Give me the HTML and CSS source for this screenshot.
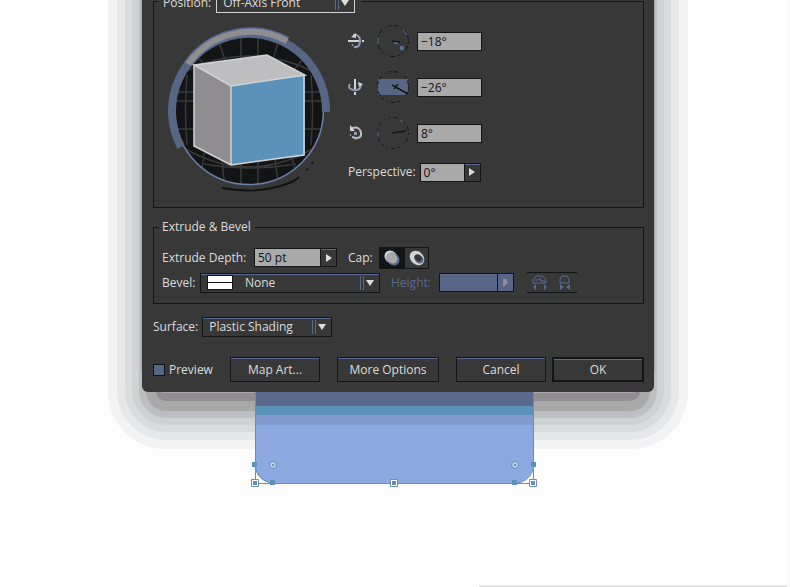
FILE: index.html
```
<!DOCTYPE html>
<html lang="en">
<head>
    <meta charset="UTF-8">
    <meta name="viewport" content="width=device-width, initial-scale=1.0">
    <title>3D Extrude &amp; Bevel Options</title>
    <link rel="stylesheet" href="styles.css">
</head>
<body>
    <main class="canvas">
        <form class="dialog">
            <fieldset class="group position-group">
                <legend class="position-legend">
                    <label for="position">Position:</label>
                    <span class="dropdown active">
                        <select id="position">
                            <option>Off-Axis Front</option>
                        </select>
                        <svg class="caret" width="20" height="16" viewBox="0 0 20 16"><path d="M1.500 1V15M4.500 1V15" stroke="#586a94"/><path d="M7 5h8l-4 6z" fill="#dcdcdc"/></svg>
                    </span>
                </legend>

                <div class="rotation">
                    <!-- Track cube -->
                    <svg class="track-cube" width="168" height="168" viewBox="166 26 168 168">
                        <circle cx="249" cy="110" r="74" fill="#131416"/>
                        <g fill="none" stroke="#383838" stroke-width="1.500">
                            <path d="M241 37V184M258 37V184M219 42L225 60M278 42L273 60M196 56L212 72M304 58L290 74M187 75Q184 110 187 145M311 75Q314 110 311 145M205 150L202 168M222 160L224 180M275 160L278 182M291 155L296 172"/>
                            <path d="M176 101H323M176 129H323M178 92H320M184 72Q249 40 314 72M184 148Q249 186 314 148M204 164Q249 172 296 164"/>
                        </g>
                        <circle cx="249" cy="110" r="74.500" fill="none" stroke="#6b7fae" stroke-width="1.500"/>
                        <path d="M181 147A77 77 0 1 1 326 112" fill="none" stroke="#586685" stroke-width="8"/>
                        <path d="M188 64A77 77 0 0 1 287 41" fill="none" stroke="#586a94" stroke-width="9"/>
                        <path d="M188 64A77 77 0 0 1 287 41" fill="none" stroke="#8f8d90" stroke-width="6"/>
                        <path d="M222 188Q250 193 272 188T299 177M306 170l2-1M312 164l1-2" fill="none" stroke="#131416" stroke-width="2"/>
                        <path d="M194 65L267 55L305 75L231 86Z" fill="#bebdc0"/>
                        <path d="M194 65L231 86V165L194 146Z" fill="#8f8d90"/>
                        <path d="M231 86L305 75V155L231 165Z" fill="#5c92ba"/>
                        <path d="M194 65L267 55L305 75L231 86ZM194 65V146L231 165L304 155V75M231 86V165" fill="none" stroke="#d2d3d5" stroke-width="1.500"/>
                    </svg>

                    <div class="axes">
                        <div class="axis">
                            <svg width="16" height="16" viewBox="0 0 16 16" fill="none"><path d="M0 8H13M14 8h2" stroke="#d2d3d5" stroke-width="2"/><path d="M5 2Q12 1 12 8T6 14" stroke="#8f9bb8" stroke-width="2"/><path d="M3 4l5-4v5z" fill="#d2d3d5"/><path d="M4 11l1 2" stroke="#bebdc0"/></svg>
                            <svg width="34" height="34" viewBox="0 0 34 34" fill="none"><circle cx="17" cy="17" r="15.500" stroke="#131416" stroke-dasharray="3 2 5 3 1 3"/><path d="M2 13v7M27 6l4 5" stroke="#586a94"/><path d="M24 22h4v4h-4zM18 18h4v2h-4z" fill="#586a94"/><path d="M16 17l8 1" stroke="#131416" stroke-width="1.500"/></svg>
                            <input class="field" type="text" value="−18°" aria-label="Rotate around the X axis">
                        </div>
                        <div class="axis">
                            <svg width="16" height="16" viewBox="0 0 16 16" fill="none"><path d="M7 0V10M7 13v3" stroke="#d2d3d5" stroke-width="2"/><path d="M2 5Q-1 10 6 11Q12 12 13 6" stroke="#8f9bb8" stroke-width="2"/><path d="M10 3l5 2l-4 3z" fill="#d2d3d5"/></svg>
                            <svg width="34" height="34" viewBox="0 0 34 34" fill="none"><path d="M2 9H32V25H2z" fill="#586685"/><circle cx="17" cy="17" r="15.500" stroke="#131416" stroke-dasharray="3 2 5 3 1 3"/><path d="M16 15l16 9M18 19l4-5" stroke="#131416" stroke-width="1.500"/></svg>
                            <input class="field" type="text" value="−26°" aria-label="Rotate around the Y axis">
                        </div>
                        <div class="axis">
                            <svg width="16" height="16" viewBox="0 0 16 16" fill="none"><path d="M4 3Q12 1 13 8T4 12" stroke="#bebdc0" stroke-width="2"/><path d="M2 0v6h5z" fill="#d2d3d5"/><path d="M6 7h3v3H6z" fill="#8f9bb8"/><path d="M2 9l1 2M6 14h3" stroke="#8f9bb8"/></svg>
                            <svg width="34" height="34" viewBox="0 0 34 34" fill="none"><circle cx="17" cy="17" r="15.500" stroke="#131416" stroke-dasharray="2 3 4 4 1 3"/><path d="M2 16v4M24 4l3 2" stroke="#586a94"/><path d="M16 17l14-2" stroke="#131416" stroke-width="1.500"/></svg>
                            <input class="field" type="text" value="8°" aria-label="Rotate around the Z axis">
                        </div>
                        <div class="perspective">
                            <label for="perspective">Perspective:</label>
                            <span class="stepper">
                                <input class="field" id="perspective" type="text" value="0°">
                                <button type="button" aria-label="Perspective slider"><svg width="6" height="8" viewBox="0 0 6 8"><path d="M0 0l6 4l-6 4z" fill="#dcdcdc"/></svg></button>
                            </span>
                        </div>
                    </div>
                </div>
            </fieldset>

            <fieldset class="group extrude-group">
                <legend>Extrude &amp; Bevel</legend>

                <div class="row">
                    <label class="depth-label" for="depth">Extrude Depth:</label>
                    <span class="stepper depth">
                        <input class="field" id="depth" type="text" value="50 pt">
                        <button type="button" aria-label="Extrude depth slider"><svg width="6" height="8" viewBox="0 0 6 8"><path d="M0 0l6 4l-6 4z" fill="#dcdcdc"/></svg></button>
                    </span>
                    <span class="cap-label">Cap:</span>
                    <span class="caps">
                        <button type="button" class="cap selected" aria-label="Turn cap on for solid appearance"><svg width="18" height="18" viewBox="0 0 18 18"><ellipse cx="8" cy="8" rx="7" ry="6" transform="rotate(45 8 8)" fill="#d2d3d5"/><ellipse cx="10" cy="10" rx="7" ry="6" transform="rotate(45 10 10)" fill="#586a94"/><ellipse cx="9" cy="9" rx="6" ry="5" transform="rotate(45 9 9)" fill="#a9a9a9"/></svg></button>
                        <button type="button" class="cap" aria-label="Turn cap off for hollow appearance"><svg width="18" height="18" viewBox="0 0 18 18"><ellipse cx="9" cy="9" rx="8" ry="6.500" transform="rotate(45 9 9)" fill="#d2d3d5"/><ellipse cx="11" cy="10" rx="5" ry="4" transform="rotate(45 11 10)" fill="#586a94"/><ellipse cx="10" cy="9" rx="4" ry="3" transform="rotate(45 10 9)" fill="#383838"/></svg></button>
                    </span>
                </div>

                <div class="row">
                    <label class="bevel-label" for="bevel">Bevel:</label>
                    <span class="dropdown bevel">
                        <svg class="thumb" width="26" height="15" viewBox="0 0 26 15"><path d="M0 0H26V15H0z" fill="#131416"/><path d="M1 1H25V7H1zM1 8H25V14H1z" fill="#fff"/></svg>
                        <select id="bevel">
                            <option>None</option>
                        </select>
                        <svg class="caret" width="20" height="16" viewBox="0 0 20 16"><path d="M1.500 1V15M4.500 1V15" stroke="#586a94"/><path d="M7 5h8l-4 6z" fill="#dcdcdc"/></svg>
                    </span>
                    <label class="height-label" for="height">Height:</label>
                    <span class="stepper height">
                        <input class="field" id="height" type="text" disabled>
                        <button type="button" disabled aria-label="Height slider"><svg width="6" height="8" viewBox="0 0 6 8"><path d="M0 0h3l2 3l-2 3l-3 2z" fill="#8f8d90"/></svg></button>
                    </span>
                    <span class="extents">
                        <button type="button" disabled aria-label="Bevel extent out"><svg width="16" height="16" viewBox="0 0 16 16"><path d="M1 8V5l3-4h7l3 4v3zM3 5h3l2-2l1 3h4" fill="none" stroke="#586a94"/><path d="M1 12l3-3v6zM15 12l-3-3v6z" fill="#586a94"/></svg></button>
                        <button type="button" disabled aria-label="Bevel extent in"><svg width="16" height="16" viewBox="0 0 16 16"><path d="M3 8V4l2-3h5l2 3v4z" fill="none" stroke="#586a94"/><path d="M7 12l-4-3v6zM9 12l4-3v6z" fill="#586a94"/></svg></button>
                    </span>
                </div>
            </fieldset>

            <div class="surface">
                <label for="surface">Surface:</label>
                <span class="dropdown">
                    <select id="surface">
                        <option>Plastic Shading</option>
                    </select>
                    <svg class="caret" width="20" height="16" viewBox="0 0 20 16"><path d="M1.500 1V15M4.500 1V15" stroke="#586a94"/><path d="M7 5h8l-4 6z" fill="#dcdcdc"/></svg>
                </span>
            </div>

            <div class="actions">
                <label class="preview"><input type="checkbox">Preview</label>
                <button type="button" class="btn">Map Art...</button>
                <button type="button" class="btn wide">More Options</button>
                <div class="confirm">
                    <button type="button" class="btn">Cancel</button>
                    <button type="submit" class="btn default">OK</button>
                </div>
            </div>
        </form>

        <!-- Selected rounded rectangle on the artboard -->
        <svg class="artwork" width="290" height="98" viewBox="250 392 290 98">
            <path d="M255 392H533V465A18 18 0 0 1 515 483H273A18 18 0 0 1 255 465Z" fill="#8da7e0"/>
            <path d="M255 392H533V406H255z" fill="#5b6a8c"/>
            <path d="M255 406H533V415H255z" fill="#5c92ba"/>
            <path d="M255 415H533V425H255z" fill="#819bce"/>
            <path d="M255.500 392V483.500H533.500V392M255.500 465A18 18 0 0 0 273 483M533.500 465A18 18 0 0 1 515 483" fill="none" stroke="#5c92ba"/>
            <path d="M252 462h5v5h-5zM270 480h5v5h-5zM531 462h5v5h-5zM512 480h5v5h-5z" fill="#5c92ba"/>
            <g fill="#bdd0e8" stroke="#5c92ba">
                <circle cx="273" cy="465" r="3.500"/>
                <circle cx="515" cy="465" r="3.500"/>
            </g>
            <path d="M272 464h2v2h-2zM514 464h2v2h-2z" fill="#5c92ba"/>
            <g fill="#fff" stroke="#6f8fb0">
                <path d="M251.500 479.500h7v7h-7zM390.500 479.500h7v7h-7zM529.500 479.500h7v7h-7z"/>
            </g>
            <path d="M253 481h4v4h-4zM392 481h4v4h-4zM531 481h4v4h-4z" fill="#5c92ba"/>
        </svg>

        <div class="window-edge"></div>
    </main>
</body>
</html>
```
FILE: styles.css
```
* {
    box-sizing: border-box;
}
body {
    margin: 0;
    font-family: 'Open Sans', 'Noto Sans', sans-serif;
    font-size: 12px;
    font-weight: 500;
    line-height: 18px;
    color: #dcdcdc;
    background: #fdfdfd;
}
.canvas {
    position: relative;
    z-index: 0;
    min-height: 100vh;
    overflow: hidden;
    border-right: 1px solid #f3f3f3;
}
svg {
    display: block;
    flex: none;
}
input,
select,
button {
    margin: 0;
    padding: 0;
    font: inherit;
    color: inherit;
    border-radius: 0;
}

/* Dialog: its title bar is scrolled off the top */
.dialog {
    position: relative;
    margin: -20px 135px 0 142px;
    padding: 9px 10px 10px 11px;
    background: #383838;
    border-radius: 0 0 6px 6px;
}
.dialog::before {
    content: "";
    position: absolute;
    inset: -80px 0 0;
    z-index: -1;
    border-radius: 24px;
    box-shadow:
        0 0 0 1px #a9a9a9,
        0 23px 0 -14px #8f8d90,
        0 23px 0 -4px #a9a9a9,
        0 23px 0 3px #bdbec1,
        0 23px 0 10px #d0d1d1,
        0 23px 0 17px #dadbdd,
        0 23px 0 25px #e6e7e9,
        0 23px 0 34px #f3f3f3;
}

.group {
    margin: 0;
    min-width: 0;
    border: 1px solid #131416;
}
.position-group {
    padding: 5px 12px 13px;
}
.position-legend {
    display: flex;
    align-items: center;
    gap: 5px;
    height: 24px;
    margin-left: -8px;
    padding: 4px 6px 0 5px;
}
.rotation {
    display: flex;
    align-items: flex-start;
    gap: 14px;
}
.track-cube {
    margin-top: 8px;
}
.axis {
    display: flex;
    align-items: center;
    height: 46px;
}
.axis svg:first-child {
    margin-right: 12px;
}
.axis .field {
    width: 65px;
    margin-left: 7px;
}
.perspective {
    display: flex;
    align-items: center;
    gap: 4px;
    height: 32px;
}

/* Controls */
.field {
    min-width: 0;
    height: 19px;
    padding: 0 3px;
    color: #131416;
    background: #a9a9a9;
    border: 1px solid #131416;
}
.stepper {
    display: flex;
    width: 61px;
}
.stepper .field {
    flex: 1;
}
.stepper button {
    display: flex;
    align-items: center;
    justify-content: center;
    width: 16px;
    background: #383838;
    border: 1px solid #131416;
    border-left: none;
    box-shadow: inset 0 1px #586a94;
}
.dropdown {
    position: relative;
    display: flex;
    align-items: center;
    width: 130px;
    height: 20px;
    background: #383838;
    border: 1px solid #131416;
    box-shadow: inset 0 1px #586a94;
}
.dropdown select {
    flex: 1;
    padding: 0 24px 0 6px;
    appearance: none;
    background: none;
    border: none;
}
.dropdown .caret {
    position: absolute;
    right: 0;
    pointer-events: none;
}
.dropdown.active {
    width: 139px;
    border-color: #d2d3d5;
}

.extrude-group {
    margin-top: 10px;
    padding: 9px 8px 8px;
}
.extrude-group legend {
    padding: 0 4px 0 0;
    border-left: 3px solid #383838;
    margin-left: -3px;
}
.row {
    display: flex;
    align-items: center;
    height: 25px;
}
.depth-label {
    width: 92px;
}
.depth {
    width: 83px;
}
.cap-label {
    width: 31px;
    margin-left: 11px;
}
.caps,
.extents {
    display: flex;
}
.cap,
.extents button {
    display: flex;
    align-items: center;
    justify-content: center;
    width: 25px;
    height: 22px;
    background: #383838;
    border: 1px solid #131416;
}
.cap.selected {
    background: #131416;
}
.bevel-label {
    width: 38px;
}
.bevel {
    width: 180px;
}
.bevel .thumb {
    margin-left: 6px;
}
.bevel select {
    padding-left: 12px;
}
.height-label {
    width: 48px;
    margin-left: 11px;
    color: #586a94;
}
.height {
    width: 75px;
}
.height .field,
.height button {
    background: #586685;
}
.extents {
    margin-left: 13px;
}
.extents button {
    height: 21px;
    border-width: 1px 0;
}

.surface {
    display: flex;
    align-items: center;
    gap: 4px;
    margin-top: 13px;
}
.actions {
    display: flex;
    align-items: center;
    gap: 17px;
    margin-top: 20px;
}
.preview {
    display: flex;
    align-items: center;
    gap: 4px;
    margin-right: auto;
}
.preview input {
    width: 12px;
    height: 12px;
    appearance: none;
    background: #586685;
    border: 1px solid #131416;
}
.confirm {
    display: flex;
    gap: 6px;
}
.btn {
    width: 90px;
    height: 25px;
    background: #383838;
    border: 1px solid #131416;
    box-shadow: inset 0 1px #586a94;
}
.btn.wide {
    width: 102px;
}
.btn.default {
    width: 92px;
    border-width: 2px;
}

.artwork {
    margin: 0 auto;
}
.window-edge {
    position: absolute;
    right: 2px;
    bottom: 0;
    width: 39%;
    height: 2px;
    background: #d8d8d8;
    border-top: 1px solid #f0f0f0;
}
```
